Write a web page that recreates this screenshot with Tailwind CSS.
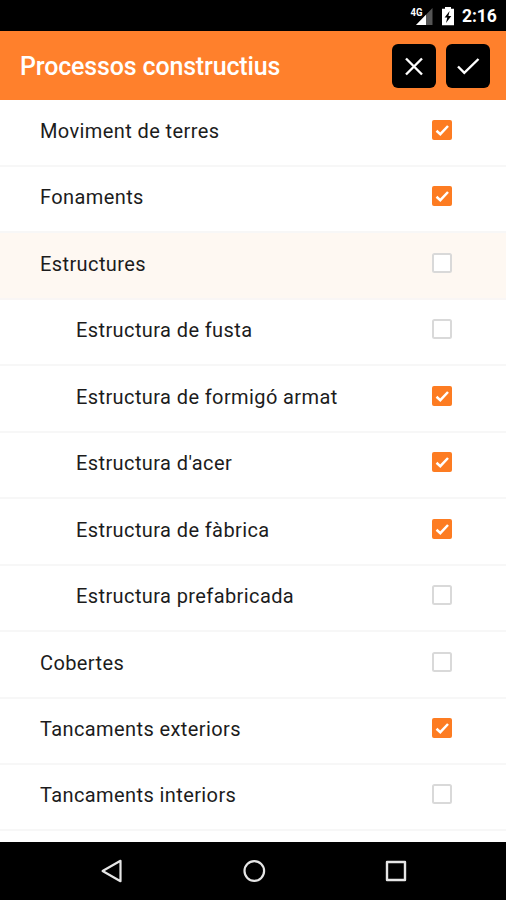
<!DOCTYPE html>
<html lang="ca">
<head>
<meta charset="utf-8">
<title>Processos constructius</title>
<script src="https://cdn.jsdelivr.net/npm/@tailwindcss/browser@4"></script>
</head>
<body class="w-[506px] h-[900px] overflow-hidden bg-white font-[Roboto,sans-serif] text-[#1c1c1c]">
<svg class="hidden">
  <symbol id="on" viewBox="0 0 20 20"><rect width="20" height="20" rx="2" fill="#fd7c22"/><path d="M4.500 10.800 8.300 14.200 16 6" fill="none" stroke="#fff" stroke-width="2.500"/></symbol>
  <symbol id="off" viewBox="0 0 20 20"><rect x="1" y="1" width="18" height="18" rx="1.5" fill="#fff" stroke="#d9d9d9" stroke-width="2"/></symbol>
</svg>
<div class="flex h-full flex-col">
  <div class="flex h-[31px] shrink-0 items-center justify-end bg-black pr-[9px] text-white">
    <svg class="h-[31px] w-[48px]" viewBox="0 0 48 31">
      <path d="M22.500 8V25H6z" fill="#555"/>
      <path d="M16 14.700V25H6z" fill="#fff"/>
      <text x="0.500" y="15.500" font-family="Roboto" font-weight="700" font-size="10" textLength="12" lengthAdjust="spacingAndGlyphs" fill="#fff">4G</text>
      <path d="M32 8.700h3V7h6v1.700h3V25.300H32z" fill="#fff"/>
      <path d="M39.600 11 34.600 17.600h2.700L36 23 41.300 16h-2.900z" fill="#000"/>
    </svg>
    <span class="ml-[4px] w-[35px] pt-[2px] text-[17.500px] leading-[31px] font-bold tracking-[-0.100px] whitespace-nowrap">2:16</span>
  </div>
  <header class="flex h-[69px] shrink-0 items-center bg-[#ff802c] pr-4 pl-5">
    <h1 class="flex-1 pt-[2px] text-[25px] font-medium tracking-[-0.160px] text-white">Processos constructius</h1>
    <button class="mr-[10px] grid size-[44px] place-items-center rounded-[6px] bg-black">
      <svg class="size-[44px]" viewBox="0 0 44 44" fill="none" stroke="#fff" stroke-width="2.400"><path d="M14 14.500 30 30.500M30 14.500 14 30.500"/></svg>
    </button>
    <button class="grid size-[44px] place-items-center rounded-[6px] bg-black">
      <svg class="size-[44px]" viewBox="0 0 44 44" fill="none" stroke="#fff" stroke-width="2.400"><path d="M12 22.500 18.300 28.900 32.500 15"/></svg>
    </button>
  </header>
  <ul class="h-[742px] shrink-0 overflow-hidden pt-[0.600px] text-[20px] tracking-[0.4px]">
    <li class="flex h-[66.450px] items-center border-b-2 border-[#f7f7f7] pr-[54px] pb-[3.600px] pl-10"><span class="flex-1">Moviment de terres</span><svg class="mb-[2px] size-5"><use href="#on"/></svg></li>
    <li class="flex h-[66.450px] items-center border-b-2 border-[#f7f7f7] pr-[54px] pb-[3.600px] pl-10"><span class="flex-1">Fonaments</span><svg class="mb-[2px] size-5"><use href="#on"/></svg></li>
    <li class="flex h-[66.450px] items-center border-b-2 border-[#f9f6f5] bg-[#fef8f2] pr-[54px] pb-[3.600px] pl-10"><span class="flex-1">Estructures</span><svg class="mb-[2px] size-5"><use href="#off"/></svg></li>
    <li class="flex h-[66.450px] items-center border-b-2 border-[#f7f7f7] pr-[54px] pb-[3.600px] pl-[76px]"><span class="flex-1">Estructura de fusta</span><svg class="mb-[2px] size-5"><use href="#off"/></svg></li>
    <li class="flex h-[66.450px] items-center border-b-2 border-[#f7f7f7] pr-[54px] pb-[3.600px] pl-[76px]"><span class="flex-1">Estructura de formigó armat</span><svg class="mb-[2px] size-5"><use href="#on"/></svg></li>
    <li class="flex h-[66.450px] items-center border-b-2 border-[#f7f7f7] pr-[54px] pb-[3.600px] pl-[76px]"><span class="flex-1">Estructura d'acer</span><svg class="mb-[2px] size-5"><use href="#on"/></svg></li>
    <li class="flex h-[66.450px] items-center border-b-2 border-[#f7f7f7] pr-[54px] pb-[3.600px] pl-[76px]"><span class="flex-1">Estructura de fàbrica</span><svg class="mb-[2px] size-5"><use href="#on"/></svg></li>
    <li class="flex h-[66.450px] items-center border-b-2 border-[#f7f7f7] pr-[54px] pb-[3.600px] pl-[76px]"><span class="flex-1">Estructura prefabricada</span><svg class="mb-[2px] size-5"><use href="#off"/></svg></li>
    <li class="flex h-[66.450px] items-center border-b-2 border-[#f7f7f7] pr-[54px] pb-[3.600px] pl-10"><span class="flex-1">Cobertes</span><svg class="mb-[2px] size-5"><use href="#off"/></svg></li>
    <li class="flex h-[66.450px] items-center border-b-2 border-[#f7f7f7] pr-[54px] pb-[3.600px] pl-10"><span class="flex-1">Tancaments exteriors</span><svg class="mb-[2px] size-5"><use href="#on"/></svg></li>
    <li class="flex h-[66.450px] items-center border-b-2 border-[#f7f7f7] pr-[54px] pb-[3.600px] pl-10"><span class="flex-1">Tancaments interiors</span><svg class="mb-[2px] size-5"><use href="#off"/></svg></li>
  </ul>
  <nav class="flex h-[58px] shrink-0 items-center justify-between bg-black pr-[97px] pl-[98px] text-[#e6e6e6]">
    <svg class="size-[26px]" viewBox="0 0 26 26" fill="none" stroke="currentColor" stroke-width="2.200" stroke-linejoin="round"><path d="M22.500 2.800V23.200L4.600 13z"/></svg>
    <svg class="size-[26px]" viewBox="0 0 26 26" fill="none" stroke="currentColor" stroke-width="2.200"><circle cx="13.300" cy="13" r="9.800"/></svg>
    <svg class="size-[26px]" viewBox="0 0 26 26" fill="none" stroke="currentColor" stroke-width="2.400" stroke-linejoin="round"><rect x="4" y="4" width="18" height="18"/></svg>
  </nav>
</div>
</body>
</html>
